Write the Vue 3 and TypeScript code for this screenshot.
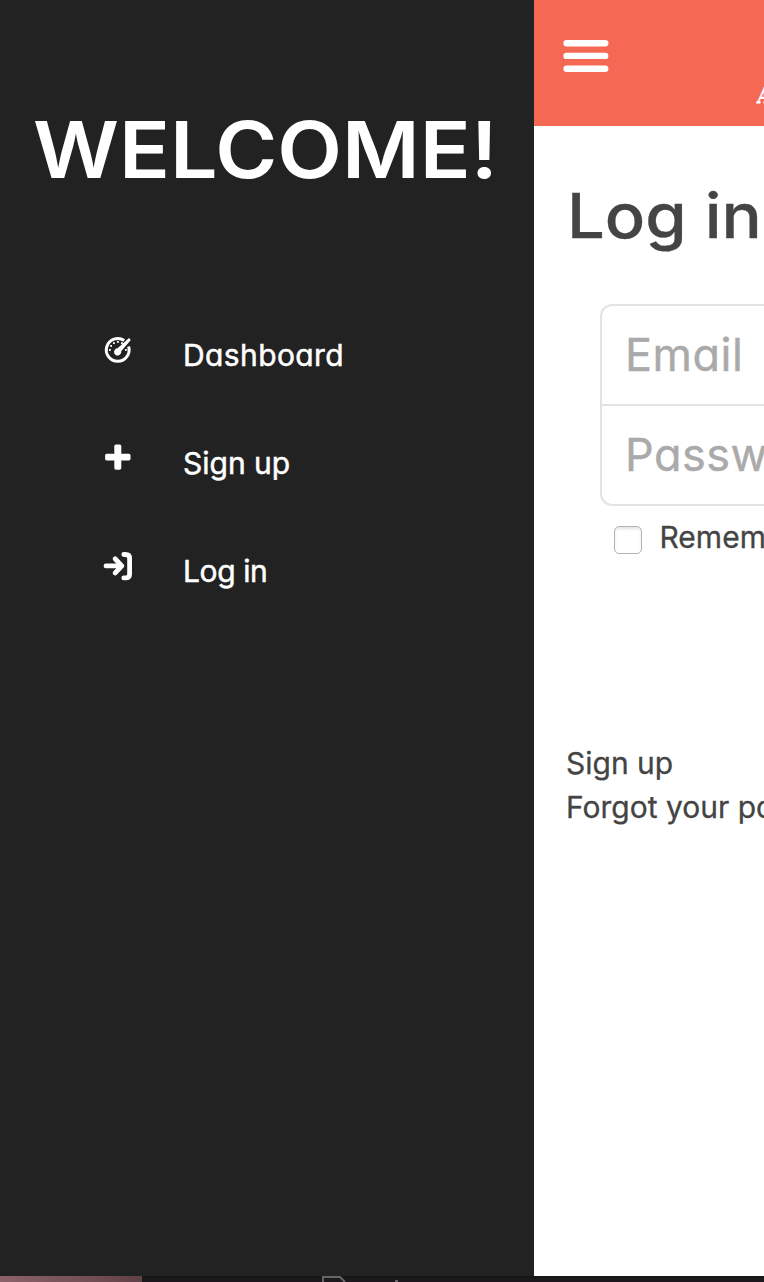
<script setup lang="ts">
interface MenuItem {
  label: string
  icon: 'dashboard' | 'plus' | 'login'
}

const items: MenuItem[] = [
  { label: 'Dashboard', icon: 'dashboard' },
  { label: 'Sign up', icon: 'plus' },
  { label: 'Log in', icon: 'login' },
]
</script>

<template>
  <div class="screen">
    <div class="app">
      <aside class="sidebar">
        <h1 class="welcome">WELCOME!</h1>
        <nav class="menu">
          <a v-for="item in items" :key="item.label" class="item">
            <svg class="icon" width="30" height="30" viewBox="0 0 30 30" fill="none" stroke="#fff">
              <template v-if="item.icon === 'dashboard'">
                <path d="M21.2 5.5A11.4 11.4 0 1 0 25.6 11.5" stroke-width="3" />
                <path d="M27.8 4.9L18.2 16.3A3.6 3.6 0 1 1 14.6 13.3L26 3.1Z" fill="#fff" stroke="none" />
                <g fill="#fff" stroke="none">
                  <rect x="6" y="14" width="1.8" height="1.8" />
                  <rect x="7.2" y="10" width="1.8" height="1.8" />
                  <rect x="10" y="7.2" width="1.8" height="1.8" />
                  <rect x="14" y="6" width="1.8" height="1.8" />
                  <rect x="18" y="7.2" width="1.8" height="1.8" />
                  <rect x="22" y="14" width="1.8" height="1.8" />
                </g>
              </template>
              <g v-else-if="item.icon === 'plus'" fill="#fff" stroke="none">
                <rect x="11.3" y="1.4" width="7" height="25.4" rx="1.7" />
                <rect x="2.1" y="10.7" width="25.4" height="6.8" rx="1.7" />
              </g>
              <g v-else stroke-linecap="round" stroke-linejoin="round">
                <path d="M2.9 14.9H18" stroke-width="4.6" />
                <path d="M12.2 7.9L18.8 14.9L12.2 21.9" stroke-width="5" />
                <path d="M20.8 3.5H22.6Q26.6 3.5 26.6 7.5V22.9Q26.6 26.9 22.6 26.9H20.8" stroke-width="4.8" />
              </g>
            </svg>
            <span class="label" :class="item.icon">{{ item.label }}</span>
          </a>
        </nav>
      </aside>

      <main class="page">
        <header class="topbar">
          <svg class="burger" width="46" height="34" viewBox="0 0 46 34" fill="#fff">
            <rect x="0.4" y="1" width="45" height="6.4" rx="3.2" />
            <rect x="0.4" y="13.7" width="45" height="6.4" rx="3.2" />
            <rect x="0.4" y="26.5" width="45" height="6.4" rx="3.2" />
          </svg>
          <span class="tagline">A</span>
        </header>
        <h2 class="title">Log in</h2>
        <div class="fields">
          <div class="field email">Email</div>
          <div class="field password">Password</div>
        </div>
        <label class="remember">
          <span class="box"></span>
          <span class="remember-text">Remember me</span>
        </label>
        <div class="links">
          <a class="signup">Sign up</a>
          <a class="forgot">Forgot your password?</a>
        </div>
      </main>
    </div>
    <footer class="dock">
      <div class="thumb"></div>
      <svg class="doc" width="90" height="6" viewBox="0 0 90 6" fill="none" stroke="#666">
        <path d="M1 6V1H18L23 6" stroke-width="2" />
        <path d="M73 5H76" stroke-width="2" />
      </svg>
    </footer>
  </div>
</template>

<style>
html,
body {
  margin: 0;
  overflow: hidden;
}
</style>

<style scoped>
.screen {
  width: 764px;
  height: 1282px;
  overflow: hidden;
  font-family: Inter, "Liberation Sans", sans-serif;
  font-feature-settings: "cv11" 1;
  white-space: nowrap;
}
.app {
  display: flex;
  height: 1276px;
}
.sidebar {
  flex: 0 0 534px;
  box-sizing: border-box;
  padding-top: 100px;
  background: #222;
  color: #fff;
}
.welcome {
  margin: 0 0 101px 32.5px;
  font-size: 78px;
  line-height: 100px;
  font-weight: 600;
  transform: scaleX(1.08);
  transform-origin: left;
}
.item {
  display: flex;
  align-items: center;
  height: 108px;
  padding-left: 103px;
}
.icon {
  margin-top: -10px;
}
.label {
  margin-left: 50px;
  font-size: 30px;
  letter-spacing: 0;
  -webkit-text-stroke: 0.5px #fff;
}
.label.dashboard {
  letter-spacing: 0.4px;
}
.label.login {
  letter-spacing: -0.4px;
}
.page {
  flex: 1;
  min-width: 0;
  overflow: hidden;
  background: #fff;
  color: #444;
}
.topbar {
  display: flex;
  align-items: flex-start;
  height: 126px;
  background: #f56954;
  color: #fff;
}
.burger {
  flex: none;
  margin: 39px 0 0 29px;
}
.tagline {
  margin: 80px 0 0 149px;
  font: bold 22px/30px "DejaVu Serif", serif;
  transform: scaleX(0.72) skewX(-12deg);
  transform-origin: left;
  -webkit-text-stroke: 0.8px #fff;
}
.title {
  margin: 50px 0 48px 33px;
  font-size: 62px;
  line-height: 80px;
  font-weight: 500;
  transform: scaleX(1.08);
  transform-origin: left;
  -webkit-text-stroke: 0.3px #444;
}
.fields {
  box-sizing: border-box;
  width: 560px;
  height: 202px;
  margin-left: 66px;
  border: 2px solid #e3e3e3;
  border-radius: 12px;
}
.field {
  box-sizing: border-box;
  height: 100px;
  padding-left: 23px;
  font-size: 45px;
  line-height: 97px;
  letter-spacing: 0.5px;
  color: #aaa;
  -webkit-text-stroke: 0.4px #aaa;
}
.email {
  border-bottom: 2px solid #e3e3e3;
}
.remember {
  display: flex;
  align-items: flex-start;
  margin: 20px 0 0 80px;
}
.box {
  flex: none;
  box-sizing: border-box;
  width: 28px;
  height: 28px;
  border: 1px solid #b4b4b4;
  border-radius: 5px;
  box-shadow: inset 0 2px 3px #e4e4e4;
}
.remember-text {
  margin-left: 17.5px;
  font-size: 30px;
  line-height: 22px;
  -webkit-text-stroke: 0.3px #444;
}
.links {
  display: flex;
  flex-direction: column;
  margin: 187px 0 0 32px;
  font-size: 30px;
  line-height: 44px;
  -webkit-text-stroke: 0.3px #444;
}
.dock {
  display: flex;
  height: 6px;
  background: linear-gradient(#151515, #1b1b1c 3px, #1b1519);
}
.thumb {
  width: 142px;
  background: linear-gradient(90deg, #8c6269, #744f56 60%, #5f4146);
}
.doc {
  margin-left: 180px;
}
</style>
